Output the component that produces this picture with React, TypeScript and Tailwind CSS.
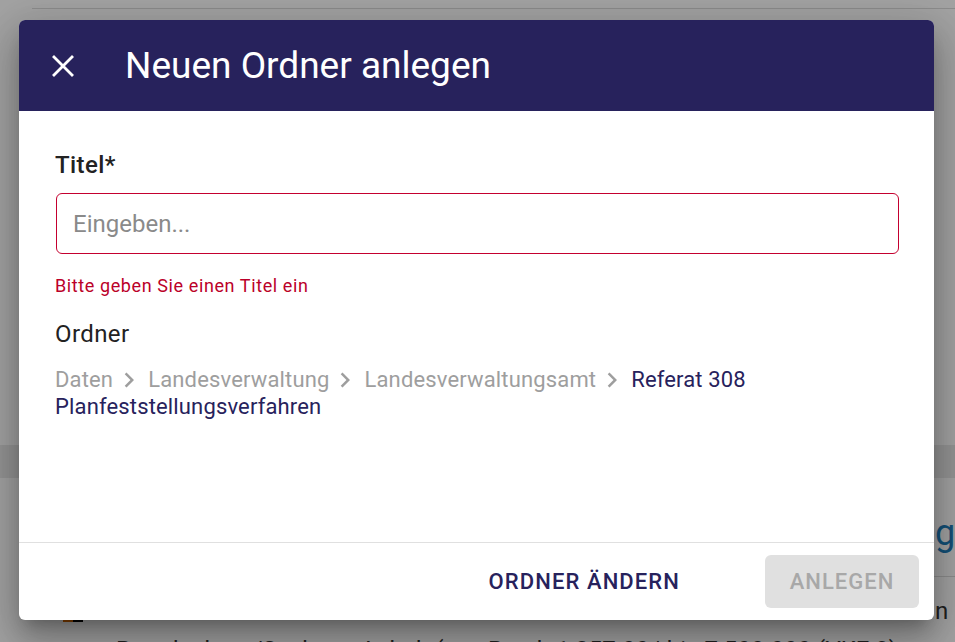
import { FC } from "react";

const crumbs = ["Daten", "Landesverwaltung", "Landesverwaltungsamt"];

const Chevron: FC = () => (
  <svg viewBox="0 0 24 24" className="w-[30px] h-[30px] -my-[2px] ml-px mr-[4px] shrink-0 fill-[#9e9e9e]">
    <path d="M10 6 8.59 7.41 13.17 12l-4.58 4.59L10 18l6-6z" />
  </svg>
);

const BackgroundPage: FC = () => (
  <div className="w-[955px] h-[642px] overflow-hidden bg-white text-[#333]">
    <div className="h-2" />
    <div className="ml-8 border-t border-[#dcdcdc]" />
    <div className="h-[436px]" />
    <div className="h-[33px] bg-[#e9e9e9]" />
    <div className="h-[98px] pt-[33px] whitespace-nowrap">
      <span className="ml-[935px] text-[36px] leading-[44px] text-[#1f7dbb]">gebiete</span>
    </div>
    <div className="ml-[100px] border-t border-[#dcdcdc]" />
    <div className="flex items-start h-[58px] whitespace-nowrap">
      <div className="ml-[63px] mt-[25px] flex w-5 h-5 shrink-0">
        <div className="w-1/2 bg-[#d86a00]" />
        <div className="w-1/2 bg-black" />
      </div>
      <span className="ml-[852px] mt-[19px] text-[24px] leading-[30px]">n bearbeiten</span>
    </div>
    <div className="pl-[116px] whitespace-nowrap text-[24px] leading-[30px]">
      Brandenburg/Sachsen-Anhalt (von Bruch 1:257.00 | bis 7:500.000 (VKE 3)
    </div>
  </div>
);

const NewFolderDialog: FC = () => (
  <div className="absolute left-[19px] top-[20px] w-[915px] h-[600px] flex flex-col bg-white rounded-md overflow-hidden shadow-[0_11px_15px_-7px_rgba(0,0,0,0.25),0_24px_38px_3px_rgba(0,0,0,0.18),0_9px_46px_8px_rgba(0,0,0,0.15)]">
    <div className="h-[91px] shrink-0 bg-[#27225c] flex items-center text-white">
      <button aria-label="Schließen" className="ml-[32px] w-[24px] h-[24px] flex items-center justify-center">
        <svg viewBox="0 0 24 24" className="w-[24px] h-[24px]" stroke="white" strokeWidth="2.8" strokeLinecap="square">
          <path d="M3 3 21 21M21 3 3 21" />
        </svg>
      </button>
      <h2 className="ml-[50px] text-[37px] leading-[44px] font-normal">Neuen Ordner anlegen</h2>
    </div>

    <div className="flex-1 px-9 pt-[38px]">
      <label className="block text-[24px] leading-[32px] font-medium tracking-[0.4px] text-[#222]">Titel*</label>
      <input
        placeholder="Eingeben..."
        className="mt-3 ml-px w-[843px] h-[61px] px-[16px] rounded-md border border-[#c4002f] text-[24px] text-[#222] placeholder:text-[#8a8a8a] outline-none"
      />
      <p className="mt-5 text-[18px] leading-[24px] tracking-[0.6px] text-[#bb0029]">
        Bitte geben Sie einen Titel ein
      </p>
      <p className="mt-5 text-[24px] leading-[32px] tracking-[0.4px] text-[#222]">Ordner</p>
      <div className="mt-4 text-[22px] leading-[27px] tracking-[0.15px] text-[#9e9e9e]">
        <div className="flex items-center">
          {crumbs.map((c) => (
            <div key={c} className="flex items-center">
              <span>{c}</span>
              <Chevron />
            </div>
          ))}
          <span className="text-[#27225c]">Referat 308</span>
        </div>
        <div className="text-[#27225c]">Planfeststellungsverfahren</div>
      </div>
    </div>

    <div className="h-[78px] shrink-0 border-t border-[#e0e0e0] flex items-center justify-end pr-[15px]">
      <button className="mr-[85px] text-[22px] font-medium tracking-[1.1px] text-[#27225c]">
        ORDNER ÄNDERN
      </button>
      <button
        disabled
        className="w-[154px] h-[53px] -mt-px rounded-md bg-[#e0e0e0] text-[22px] font-medium tracking-[1px] text-[#a8a8a8]"
      >
        ANLEGEN
      </button>
    </div>
  </div>
);

export default function App() {
  return (
    <div className="relative w-[955px] h-[642px] overflow-hidden font-['Roboto',sans-serif]">
      <BackgroundPage />
      <div className="absolute inset-0 bg-black/[0.36]" />
      <NewFolderDialog />
    </div>
  );
}
